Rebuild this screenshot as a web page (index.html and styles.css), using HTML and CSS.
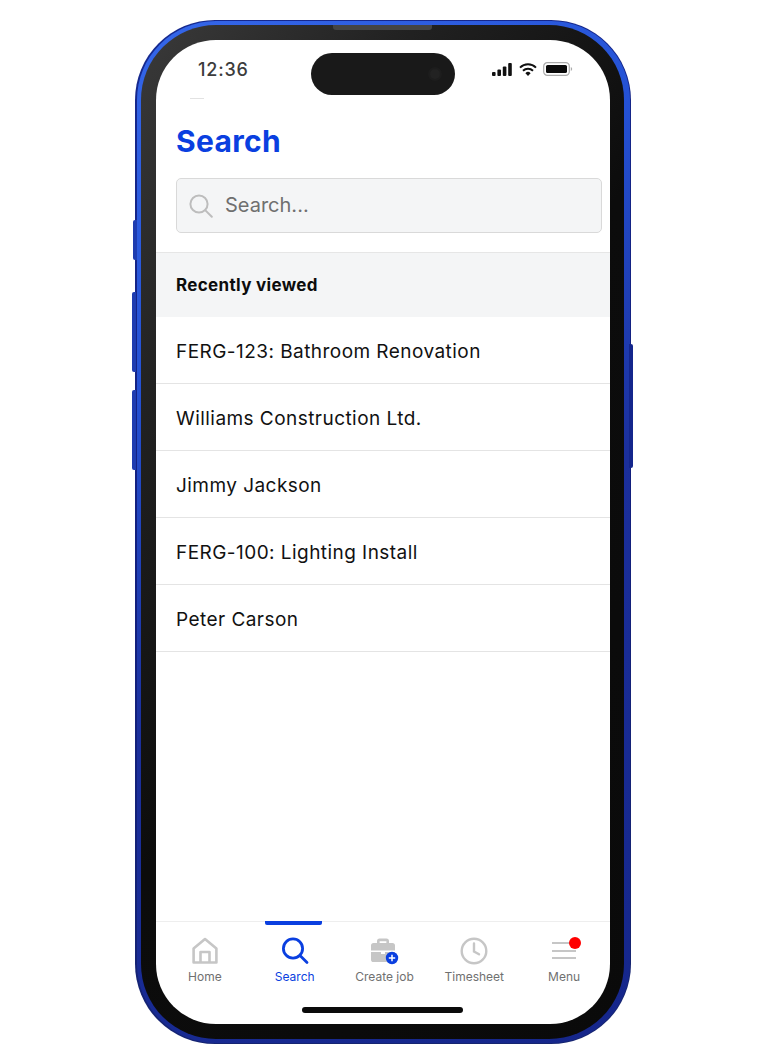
FILE: index.html
```html
<!DOCTYPE html>
<html lang="en">

<head>
    <meta charset="UTF-8">
    <meta name="viewport" content="width=device-width, initial-scale=1.0">
    <title>Search</title>
    <link rel="stylesheet" href="styles.css">
</head>

<body>
    <div class="phone">
        <div class="side-btn btn-mute"></div>
        <div class="side-btn btn-up"></div>
        <div class="side-btn btn-down"></div>
        <div class="side-btn btn-power"></div>
        <div class="rim">
            <div class="bezel">
                <div class="speaker"></div>
                <div class="screen">
                    <div class="island"><span class="camera"></span></div>

                    <div class="status-bar">
                        <span class="time">12:36</span>
                        <div class="status-icons">
                            <svg width="21" height="13" viewBox="0 0 21 13">
                                <rect x="0" y="9" width="3.6" height="4" rx="1" fill="#111" />
                                <rect x="5.4" y="6.5" width="3.6" height="6.5" rx="1" fill="#111" />
                                <rect x="10.8" y="3.5" width="3.6" height="9.5" rx="1" fill="#111" />
                                <rect x="16.2" y="0" width="3.6" height="13" rx="1" fill="#111" />
                            </svg>
                            <svg width="18" height="13" viewBox="0 0 18 13" fill="none" stroke="#111" stroke-width="2">
                                <path d="M1 4.6a11.5 11.5 0 0 1 16 0" />
                                <path d="M4 7.8a7.2 7.2 0 0 1 10 0" />
                                <path d="M9 13l-2.6-2.8a3.6 3.6 0 0 1 5.2 0z" fill="#111" stroke="none" />
                            </svg>
                            <svg width="30" height="14" viewBox="0 0 30 14">
                                <rect x="0.7" y="0.7" width="25.6" height="12.6" rx="3.6" fill="none" stroke="#aaa" stroke-width="1.2" />
                                <rect x="3" y="3" width="21" height="8" rx="1.6" fill="#0a0a0a" />
                                <path d="M27.8 5v4a2.2 2.2 0 0 0 1.4-2 2.2 2.2 0 0 0-1.4-2z" fill="#aaa" />
                            </svg>
                        </div>
                    </div>
                    <div class="scroll-mark"></div>

                    <h1 class="title">Search</h1>

                    <div class="search-box">
                        <svg class="search-icon" width="24" height="24" viewBox="0 0 24 24" fill="none" stroke="#bdbdbd" stroke-width="2">
                            <circle cx="10" cy="10" r="8.6" />
                            <path d="M16.4 16.4l6.4 6.4" stroke-linecap="round" />
                        </svg>
                        <span class="search-text">Search...</span>
                    </div>

                    <div class="section-head">Recently viewed</div>

                    <div class="list">
                        <div class="list-item">FERG-123: Bathroom Renovation</div>
                        <div class="list-item">Williams Construction Ltd.</div>
                        <div class="list-item">Jimmy Jackson</div>
                        <div class="list-item">FERG-100: Lighting Install</div>
                        <div class="list-item">Peter Carson</div>
                    </div>

                    <div class="tabbar">
                        <div class="tab">
                            <svg width="28" height="28" viewBox="0 0 28 28" fill="none" stroke="#c6c6c6" stroke-width="2.6" stroke-linejoin="round">
                                <path d="M14 2L2.6 11.500V25.500h22.800V11.500z" />
                                <path d="M9.500 25.500V15h9v10.500" />
                            </svg>
                            <span>Home</span>
                        </div>
                        <div class="tab active">
                            <svg width="28" height="28" viewBox="0 0 28 28" fill="none" stroke="#0a3fe0" stroke-width="2.800" stroke-linecap="round">
                                <circle cx="12" cy="11.500" r="9.600" />
                                <path d="M19 18.500l7 7" />
                            </svg>
                            <span>Search</span>
                        </div>
                        <div class="tab">
                            <svg width="30" height="28" viewBox="0 0 30 28">
                                <path d="M8 6V4.200A2.600 2.600 0 0 1 10.600 1.600h6.800A2.600 2.600 0 0 1 20 4.200V6h3.400A2.600 2.600 0 0 1 26 8.600v5H2V8.600A2.600 2.600 0 0 1 4.600 6zM10.600 6h6.800V4.200h-6.800z" fill="#c6c6c6" fill-rule="evenodd" />
                                <path d="M2 15h10v2h4v-2h10v7.400a2.600 2.600 0 0 1-2.600 2.600H4.600A2.600 2.600 0 0 1 2 22.400z" fill="#c6c6c6" />
                                <circle cx="23" cy="21" r="6.200" fill="#0a3fe0" />
                                <path d="M23 17.800v6.400M19.800 21h6.400" stroke="#fff" stroke-width="1.500" />
                            </svg>
                            <span>Create job</span>
                        </div>
                        <div class="tab">
                            <svg width="28" height="28" viewBox="0 0 28 28" fill="none" stroke="#c6c6c6" stroke-width="2.400" stroke-linecap="round">
                                <circle cx="14" cy="14" r="12.300" />
                                <path d="M14 6.500V14.500l5 2.800" />
                            </svg>
                            <span>Timesheet</span>
                        </div>
                        <div class="tab">
                            <div class="menu-icon">
                                <svg width="28" height="28" viewBox="0 0 28 28" stroke="#c6c6c6" stroke-width="2.200">
                                    <path d="M2 6h24M2 14h24M2 21h24" />
                                </svg>
                                <span class="dot"></span>
                            </div>
                            <span>Menu</span>
                        </div>
                    </div>
                    <div class="tab-indicator"></div>

                    <div class="home-bar"></div>
                </div>
            </div>
        </div>
    </div>
</body>

</html>
```

FILE: styles.css
```css
* {
    box-sizing: border-box;
}

body {
    margin: 0;
    background: #fff;
    font-family: Inter, "Liberation Sans", sans-serif;
    color: #111;
}

.phone {
    position: relative;
    width: 496px;
    height: 1024px;
    margin: 20px 0 0 135px;
    padding: 1px 1px 1px 2px;
    border-radius: 80px;
    background: linear-gradient(165deg, #16298f 0%, #121f7e 50%, #16256f 100%);
}

.rim {
    height: 100%;
    padding: 4px 6px 4px 4px;
    border-radius: 79px;
    background: linear-gradient(150deg, #3567ea 0%, #2451d4 28%, #1b2f9c 55%, #15268a 100%);
}

.side-btn {
    position: absolute;
    width: 4px;
    background: #1e3cb0;
    border-radius: 2px 0 0 2px;
}

.btn-mute {
    left: -2px;
    top: 200px;
    height: 40px;
}

.btn-up {
    left: -3px;
    top: 272px;
    height: 80px;
}

.btn-down {
    left: -3px;
    top: 370px;
    height: 80px;
}

.btn-power {
    right: -2px;
    top: 324px;
    height: 124px;
    border-radius: 0 2px 2px 0;
    background: #14268c;
}

.bezel {
    position: relative;
    height: 100%;
    padding: 15px 14px 15px 15px;
    border-radius: 75px;
    background: linear-gradient(125deg, #3a3a3a 0%, #222 22%, #0c0c0c 50%, #0a0a0a 100%);
}

.speaker {
    position: absolute;
    top: 0;
    left: 192px;
    width: 99px;
    height: 5px;
    border-radius: 0 0 3px 3px;
    background: #444;
}

.screen {
    position: relative;
    display: flex;
    flex-direction: column;
    height: 100%;
    overflow: hidden;
    border-radius: 60px;
    background: #fff;
}

.island {
    position: absolute;
    top: 13px;
    left: 155px;
    width: 144px;
    height: 42px;
    border-radius: 21px;
    background: #191919;
}

.camera {
    position: absolute;
    top: 14px;
    right: 13px;
    width: 14px;
    height: 14px;
    border-radius: 50%;
    background: #222;
    border: 2px solid #1d1d1d;
}

.status-bar {
    display: flex;
    align-items: center;
    justify-content: space-between;
    height: 58px;
    padding: 0 37px 0 42px;
}

.time {
    font-size: 18px;
    font-weight: 500;
    letter-spacing: 0.8px;
    color: #3c3c3c;
}

.status-icons {
    display: flex;
    align-items: center;
    gap: 6px;
}

.scroll-mark {
    width: 14px;
    height: 1px;
    margin-left: 34px;
    background: #e2e2e2;
}

.title {
    height: 68px;
    margin: 11px 0 0 20px;
    font-size: 30px;
    line-height: 62px;
    font-weight: 700;
    letter-spacing: 0.35px;
    color: #0a3fe0;
}

.search-box {
    display: flex;
    align-items: center;
    gap: 12px;
    width: 426px;
    height: 55px;
    margin: 0 0 0 20px;
    padding: 0 12px;
    border: 1.5px solid #d9d9d9;
    border-radius: 5px;
    background: #f4f5f6;
}

.search-text {
    margin-top: -2px;
    font-size: 20px;
    color: #6f6f6f;
}

.section-head {
    height: 65px;
    margin-top: 19px;
    padding: 0 20px;
    border-top: 1px solid #e6e6e6;
    background: #f4f5f6;
    font-size: 17px;
    font-weight: 700;
    line-height: 65px;
    letter-spacing: 0.33px;
    color: #0c0c0c;
}

.list {
    flex: 1;
}

.list-item {
    height: 67px;
    padding: 0 20px;
    border-bottom: 1px solid #e4e4e4;
    font-size: 19px;
    line-height: 70px;
    letter-spacing: 0.45px;
    color: #111;
}

.tabbar {
    display: grid;
    grid-template-columns: repeat(5, 1fr);
    height: 103px;
    padding: 0 1px 0 4px;
    border-top: 1px solid #eee;
}

.tab {
    display: flex;
    flex-direction: column;
    align-items: center;
    padding-top: 15px;
    font-size: 12px;
    color: #707070;
}

.tab span {
    margin-top: 4px;
    line-height: 16px;
}

.tab.active {
    color: #0a3fe0;
}

.tab-indicator {
    position: absolute;
    left: 109px;
    bottom: 99px;
    width: 57px;
    height: 4px;
    border-radius: 0 0 2px 2px;
    background: #0a3fe0;
}

.menu-icon {
    position: relative;
    height: 28px;
}

.tab .dot {
    position: absolute;
    top: 0;
    right: -3px;
    width: 12px;
    height: 12px;
    margin: 0;
    border-radius: 50%;
    background: #ff0000;
}

.home-bar {
    position: absolute;
    left: 146px;
    bottom: 11px;
    width: 161px;
    height: 6px;
    border-radius: 3px;
    background: #0a0a0a;
}
```
